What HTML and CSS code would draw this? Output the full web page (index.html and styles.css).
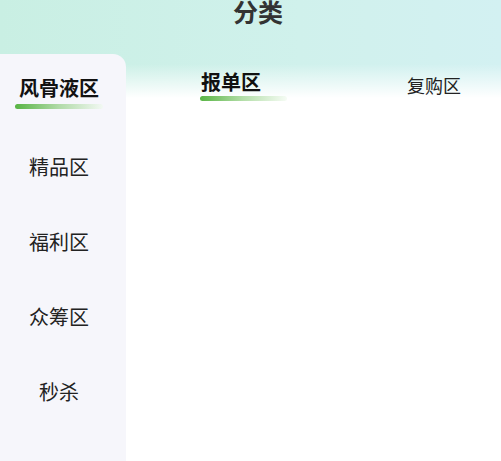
FILE: index.html
```html
<!DOCTYPE html>
<html lang="zh">
<head>
<meta charset="utf-8">
<title>分类</title>
<link rel="stylesheet" href="styles.css">
</head>
<body>
<div class="page">
  <header class="header">
    <h1 class="title">分类</h1>
  </header>
  <div class="body">
    <nav class="sidebar">
      <div class="side-item active">
        <span class="side-text">风骨液区</span>
        <span class="bar side-bar"></span>
      </div>
      <div class="side-item"><span class="side-text">精品区</span></div>
      <div class="side-item"><span class="side-text">福利区</span></div>
      <div class="side-item"><span class="side-text">众筹区</span></div>
      <div class="side-item"><span class="side-text">秒杀</span></div>
    </nav>
    <main class="main">
      <div class="tabs">
        <div class="tab active">
          <span class="tab-text">报单区</span>
          <span class="bar tab-bar"></span>
        </div>
        <div class="tab"><span class="tab-text">复购区</span></div>
      </div>
    </main>
  </div>
</div>
</body>
</html>
```

FILE: styles.css
```css
* { box-sizing: border-box; }
html, body { margin: 0; padding: 0; }
body {
  font-family: "Noto Sans CJK SC", "Noto Sans", sans-serif;
  color: #222;
  background: #fff;
}
.page {
  min-height: 100vh;
  display: flex;
  flex-direction: column;
  background:
    linear-gradient(180deg, rgba(255,255,255,0) 0, rgba(255,255,255,0) 64px, #fff 98px),
    linear-gradient(90deg, #c9efe3 0%, #d0f1ec 60%, #d3f1f2 100%);
  background-repeat: no-repeat;
  background-size: 100% 100%;
}
.header {
  height: 54px;
  padding-left: 15px;
  text-align: center;
}
.title {
  margin: 0;
  font-size: 25px;
  line-height: 23px;
  font-weight: 700;
  color: #333;
}
.body {
  flex: 1;
  display: flex;
}
.sidebar {
  width: 126px;
  background: #f6f6fb;
  border-top-right-radius: 13px;
  display: flex;
  flex-direction: column;
  padding-right: 8px;
}
.side-item {
  height: 75px;
  display: flex;
  flex-direction: column;
  align-items: center;
  justify-content: center;
}
.side-text {
  font-size: 20px;
  line-height: 28px;
  color: #222;
}
.side-item.active .side-text {
  font-weight: 700;
  color: #111;
}
.bar {
  display: block;
  height: 5px;
  border-radius: 3px;
  background: linear-gradient(90deg, #58b444 0%, rgba(120,196,100,0.55) 50%, rgba(240,250,238,0.6) 100%);
}
.side-bar {
  width: 88px;
  margin-top: 2px;
}
.main {
  flex: 1;
}
.tabs {
  display: flex;
  align-items: center;
  padding-left: 74px;
  padding-top: 15px;
  gap: 120px;
}
.tab {
  display: flex;
  flex-direction: column;
  align-items: flex-start;
}
.tab-text {
  font-size: 18px;
  line-height: 26px;
  color: #222;
}
.tab.active .tab-text {
  font-size: 20px;
  font-weight: 700;
  color: #111;
  padding-left: 1px;
}
.tab-bar {
  width: 87px;
  margin-top: 1px;
}
```
